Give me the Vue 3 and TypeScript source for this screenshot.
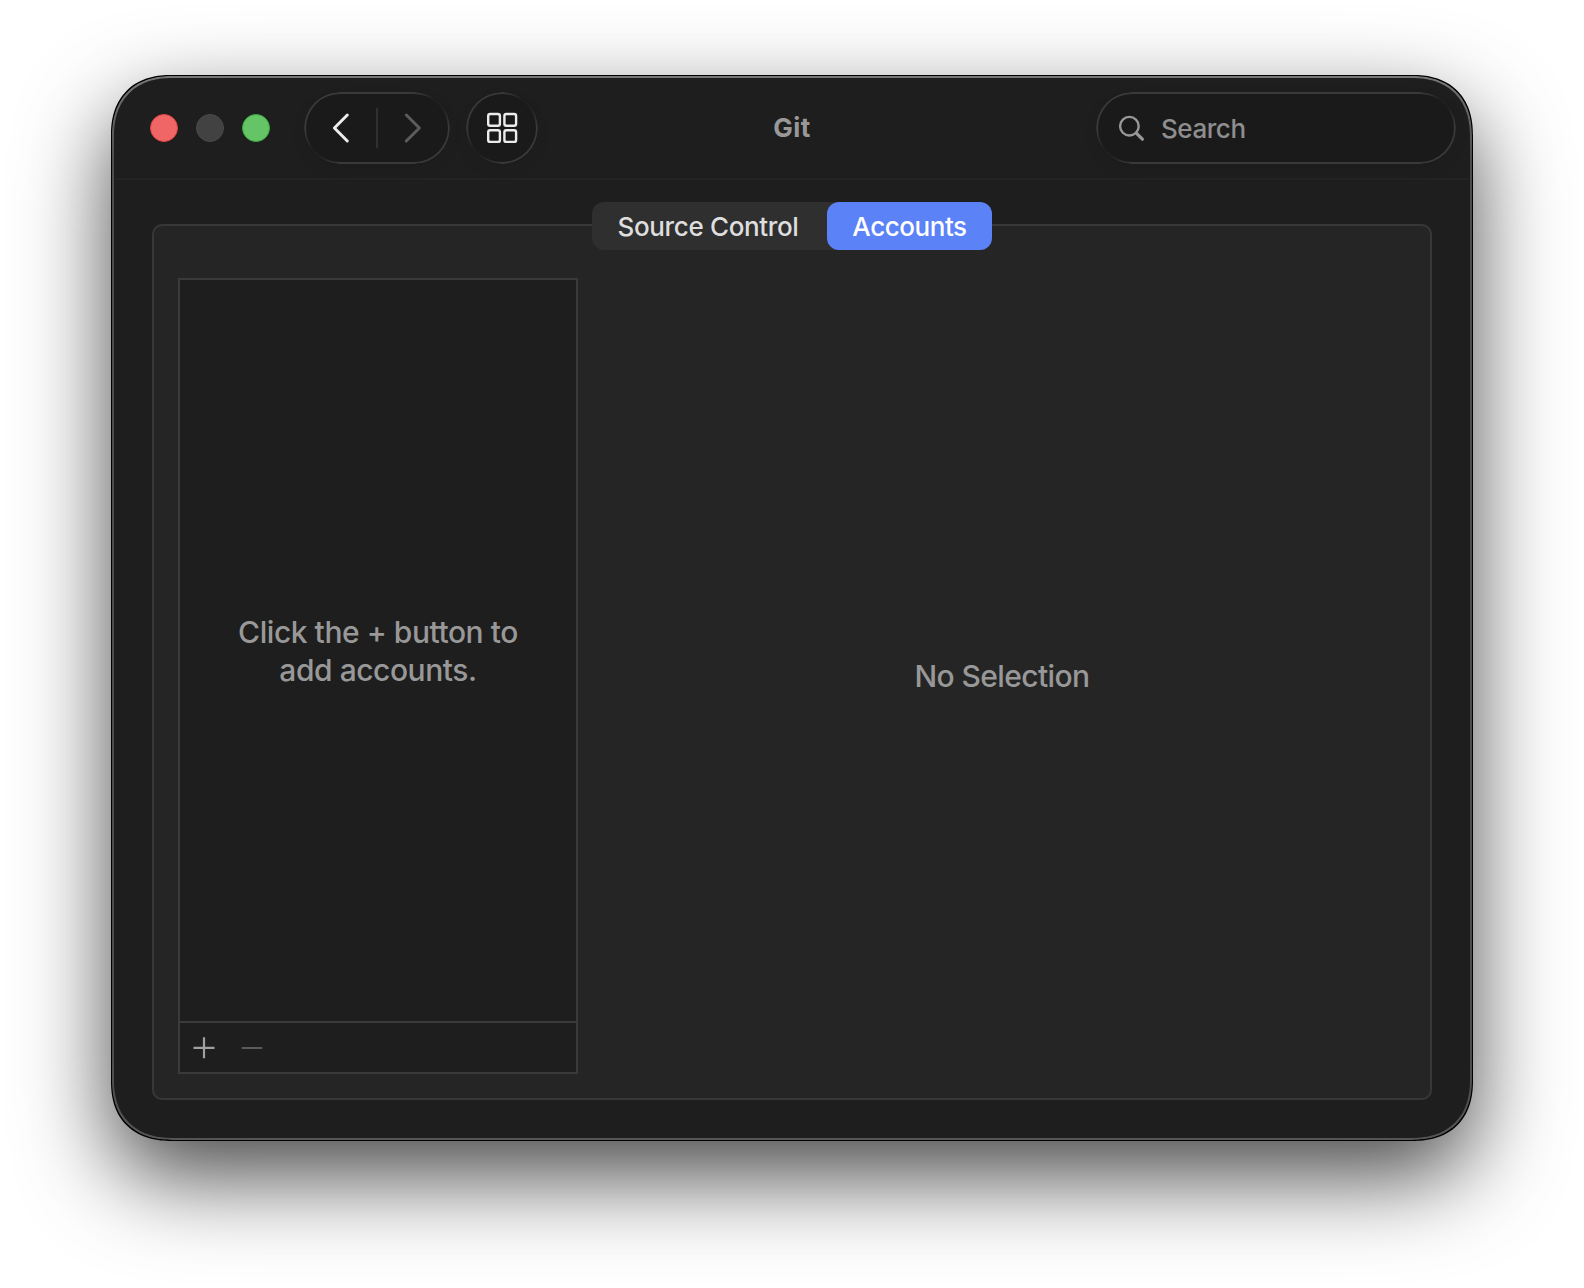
<script setup lang="ts">
import { ref } from 'vue'

const tabs = ['Source Control', 'Accounts']
const activeTab = ref('Accounts')
const lights = ['close', 'minimize', 'zoom']
</script>

<template>
  <main class="desktop">
    <section class="window">
      <header class="toolbar">
        <div class="lights">
          <span v-for="light in lights" :key="light" class="light" :class="light"></span>
        </div>
        <div class="glass nav">
          <svg width="72" height="72" viewBox="0 0 72 72" class="icon bright">
            <path d="M43.3 23 L30.4 36 L43.3 49" stroke-width="3" />
          </svg>
          <span class="nav-divider"></span>
          <svg width="72" height="72" viewBox="0 0 72 72" class="icon faint">
            <path d="M28.3 23 L41.4 36 L28.3 49" stroke-width="3" />
          </svg>
        </div>
        <div class="glass grid-button">
          <svg width="72" height="72" viewBox="0 0 72 72" class="icon bright">
            <g stroke-width="2.4">
              <rect x="22.2" y="22" width="11.7" height="11.7" rx="2" />
              <rect x="38.4" y="22" width="11.7" height="11.7" rx="2" />
              <rect x="22.2" y="38.2" width="11.7" height="11.7" rx="2" />
              <rect x="38.4" y="38.2" width="11.7" height="11.7" rx="2" />
            </g>
          </svg>
        </div>
        <h1 class="title">Git</h1>
        <div class="glass search">
          <svg width="28" height="28" viewBox="0 0 28 28" class="icon muted">
            <circle cx="12.4" cy="12.2" r="9.3" stroke-width="2.4" />
            <path d="M19.3 19.2 L25.4 25.2" stroke-width="3.2" />
          </svg>
          <span class="placeholder">Search</span>
        </div>
      </header>
      <div class="body">
        <div class="group">
          <div class="tabs">
            <button
              v-for="tab in tabs"
              :key="tab"
              class="tab"
              :class="{ active: tab === activeTab }"
              @click="activeTab = tab"
            ><span>{{ tab }}</span></button>
          </div>
          <div class="accounts">
            <div class="list"><p>Click the + button to<br />add accounts.</p></div>
            <footer class="actions">
              <svg width="22" height="22" viewBox="0 0 22 22" class="icon plus">
                <path d="M0.5 10.8 H21.5 M11 0.3 V21.3" stroke-width="2.2" />
              </svg>
              <svg width="22" height="22" viewBox="0 0 22 22" class="icon minus">
                <path d="M1.5 11 H20.5" stroke-width="2" />
              </svg>
            </footer>
          </div>
          <div class="detail"><p>No Selection</p></div>
        </div>
      </div>
    </section>
  </main>
</template>

<style>
body {
  background: #fff;
}
</style>

<style scoped>
* {
  box-sizing: border-box;
}
.desktop {
  width: 1584px;
  height: 1288px;
  padding: 76px 112px 148px;
  overflow: hidden;
  background: #fff;
  font-family: Inter, 'Liberation Sans', sans-serif;
}
.window {
  position: relative;
  display: flex;
  flex-direction: column;
  width: 1360px;
  height: 1064px;
  border-radius: 52px;
  background: #1e1e1e;
  box-shadow: 0 0 0 1px #000, 0 36px 90px rgba(0, 0, 0, 0.72);
}
.window::after {
  content: '';
  position: absolute;
  inset: 0;
  border-radius: inherit;
  padding: 2px;
  background: linear-gradient(#777, #4c4c4c 8%, #4c4c4c 92%, #555);
  -webkit-mask: linear-gradient(#000 0 0) content-box exclude, linear-gradient(#000 0 0);
  mask: linear-gradient(#000 0 0) content-box exclude, linear-gradient(#000 0 0);
  pointer-events: none;
}
@supports (corner-shape: superellipse(1.2)) {
  .window,
  .window::after {
    border-radius: 60px;
    corner-shape: superellipse(1.2);
  }
}
.toolbar {
  position: relative;
  display: flex;
  align-items: center;
  height: 104px;
  padding: 2px 16px 0 38px;
  border-bottom: 2px solid #232323;
}
.lights {
  display: flex;
  gap: 18px;
  margin-right: 34px;
}
.light {
  width: 28px;
  height: 28px;
  border-radius: 50%;
  border: 1px solid;
}
.close {
  background: #f06666;
  border-color: #e2443f;
}
.minimize {
  background: #424242;
  border-color: #4a4a4a;
}
.zoom {
  background: #65c466;
  border-color: #3cae3c;
}
.glass {
  position: relative;
  display: flex;
  align-items: center;
  height: 72px;
  border-radius: 36px;
  background: #1a1a1a;
  box-shadow: 0 6px 16px rgba(0, 0, 0, 0.06);
}
.glass::before {
  content: '';
  position: absolute;
  inset: 0;
  padding: 2px;
  border-radius: inherit;
  background:
    radial-gradient(circle at calc(100% - 10px) 10px, #202020 6px, transparent 26px),
    radial-gradient(circle at 10px calc(100% - 10px), #202020 6px, transparent 26px),
    linear-gradient(#393939, #393939);
  -webkit-mask: linear-gradient(#000 0 0) content-box exclude, linear-gradient(#000 0 0);
  mask: linear-gradient(#000 0 0) content-box exclude, linear-gradient(#000 0 0);
}
.nav {
  width: 146px;
  margin-right: 16px;
}
.nav-divider {
  width: 2px;
  height: 40px;
  background: #303030;
}
.grid-button {
  width: 72px;
}
.icon {
  display: block;
  flex: none;
  fill: none;
  stroke-linecap: round;
  stroke-linejoin: round;
}
.bright {
  stroke: #ececec;
}
.faint {
  stroke: #5c5c5c;
}
.muted {
  stroke: #989898;
}
.title {
  position: absolute;
  left: 0;
  right: 0;
  margin: 0;
  text-align: center;
  font-size: 26px;
  line-height: 32px;
  font-weight: 700;
  letter-spacing: 0.4px;
  color: #989898;
  pointer-events: none;
}
.search {
  width: 360px;
  margin-left: auto;
  padding-left: 21px;
}
.placeholder {
  margin-left: 16px;
  padding-top: 2px;
  font-size: 26px;
  line-height: 32px;
  font-weight: 550;
  letter-spacing: -0.45px;
  color: #8e8e8e;
}
.body {
  flex: 1;
  display: flex;
  padding: 44px 40px 40px;
}
.group {
  position: relative;
  flex: 1;
  display: flex;
  padding: 52px 24px 24px;
  border: 2px solid #383838;
  border-radius: 10px;
  background: #252525;
}
.tabs {
  position: absolute;
  top: -24px;
  left: 50%;
  margin-left: -200px;
  width: 400px;
  height: 48px;
  display: flex;
  border-radius: 12px;
  background: #2f2f2f;
}
.tab {
  width: 235px;
  padding: 2px 3px 0 0;
  border: 0;
  border-radius: 12px;
  background: none;
  font: 450 26px/46px Inter, 'Liberation Sans', sans-serif;
  letter-spacing: -0.35px;
  color: #dedede;
}
.tab.active {
  width: 165px;
  padding: 2px 0 0;
  background: #5b82f7;
  color: #fff;
  letter-spacing: -0.45px;
}
.accounts {
  display: flex;
  flex-direction: column;
  width: 400px;
  border: 2px solid #3a3a3a;
  background: #1e1e1e;
}
.list {
  flex: 1;
  display: flex;
  align-items: center;
  justify-content: center;
}
p {
  margin: 0;
  text-align: center;
  font-size: 30px;
  line-height: 38px;
  font-weight: 450;
  color: #989898;
  letter-spacing: -0.45px;
}
.actions {
  display: flex;
  align-items: center;
  gap: 26px;
  height: 51px;
  padding-left: 13px;
  border-top: 2px solid #3a3a3a;
}
.plus {
  stroke: #a0a0a0;
  stroke-linecap: butt;
}
.minus {
  stroke: #5a5a5a;
}
.detail {
  flex: 1;
  display: flex;
  align-items: center;
  justify-content: center;
  padding-left: 20px;
}
.detail p {
  letter-spacing: -0.6px;
}
</style>
